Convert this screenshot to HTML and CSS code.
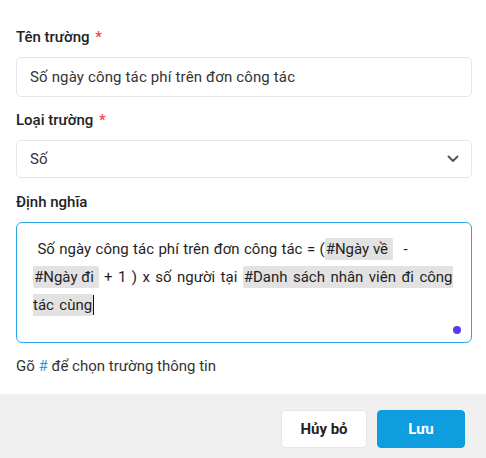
FILE: index.html
```html
<!DOCTYPE html>
<html lang="vi">
<head>
<meta charset="utf-8">
<link rel="stylesheet" href="styles.css">
</head>
<body>
<div class="dialog">
  <div class="form">
    <div class="field">
      <label class="label">Tên trường <span class="req">*</span></label>
      <div class="input">Số ngày công tác phí trên đơn công tác</div>
    </div>
    <div class="field">
      <label class="label">Loại trường <span class="req">*</span></label>
      <div class="input select">
        <span>Số</span>
        <svg class="chev" width="12" height="8" viewBox="0 0 12 8"><path d="M1.5 1.5 L6 6 L10.5 1.5" fill="none" stroke="#555" stroke-width="1.9" stroke-linecap="round" stroke-linejoin="round"/></svg>
      </div>
    </div>
    <div class="field">
      <label class="label">Định nghĩa</label>
      <div class="editor"><span class="lead">&nbsp;Số ngày công tác phí trên đơn công tác = (</span><span class="tag">#Ngày về&nbsp;</span>&nbsp; - <span class="tag">#Ngày đi&nbsp;</span> + 1 ) x số người tại <span class="tag tag-long">#Danh sách nhân viên đi công tác cùng</span><span class="caret"></span><span class="dot"></span></div>
    </div>
    <div class="hint">Gõ <span class="hash">#</span> để chọn trường thông tin</div>
  </div>
  <div class="footer">
    <button class="btn btn-cancel">Hủy bỏ</button>
    <button class="btn btn-save">Lưu</button>
  </div>
</div>
</body>
</html>
```
FILE: styles.css
```css
* { box-sizing: border-box; }
html, body { margin: 0; padding: 0; background: #fff; }
body {
  font-family: Roboto, "Noto Sans", sans-serif;
  font-size: 15px;
  color: #222;
  width: 486px;
  height: 458px;
  overflow: hidden;
}
.dialog { display: flex; flex-direction: column; height: 458px; }
.form { padding: 27px 14px 0 16px; flex: 1; }
.field { margin-bottom: 14px; }
.field:first-child { margin-bottom: 13px; }
.label {
  display: block;
  font-weight: 500;
  font-size: 15px;
  line-height: 20px;
  color: #222;
  margin-bottom: 10px;
}
.req { color: #f5424b; margin-left: 2px; }
.input {
  height: 40px;
  border: 1px solid #e6e6e6;
  border-radius: 5px;
  padding: 0 13px;
  display: flex;
  align-items: center;
  color: #333;
  font-size: 15px;
  letter-spacing: 0.15px;
}
.select { height: 38px; justify-content: space-between; padding-right: 12px; }
.chev { display: block; }
.editor {
  position: relative;
  height: 121px;
  border: 1px solid #2aa7e6;
  border-radius: 6px;
  padding: 12px 16px 0 16px;
  line-height: 28px;
  font-size: 15px;
  color: #1f1f1f;
  word-spacing: 1.7px;
}
.lead { word-spacing: 0.7px; }
.tag {
  background: #e2e2e2;
  border-radius: 2px;
  padding: 2px 1px;
  word-spacing: 0;
  -webkit-box-decoration-break: slice;
}
.tag-long { word-spacing: 1.7px; }
.caret {
  display: inline-block;
  width: 1px;
  height: 20px;
  background: #111;
  vertical-align: -5px;
}
.dot {
  position: absolute;
  right: 10px;
  bottom: 8px;
  width: 8px;
  height: 8px;
  border-radius: 50%;
  background: #5b38f2;
}
.hint {
  margin-top: -1px;
  font-size: 15px;
  color: #333;
  line-height: 20px;
}
.hash { color: #1d9be0; }
.footer {
  flex-shrink: 0;
  height: 64px;
  background: #f0f0f0;
  display: flex;
  justify-content: flex-end;
  align-items: flex-start;
  gap: 10px;
  padding: 16px 21px 0 0;
}
.btn {
  font-family: Roboto, "Noto Sans", sans-serif;
  font-size: 15px;
  font-weight: 700;
  height: 38px;
  border-radius: 4px;
  cursor: pointer;
}
.btn-cancel {
  width: 86px;
  background: #fff;
  border: 1px solid #e6e6e6;
  color: #222;
}
.btn-save {
  width: 88px;
  background: #0e9ddf;
  border: 1px solid #0e9ddf;
  color: #fff;
}
```
